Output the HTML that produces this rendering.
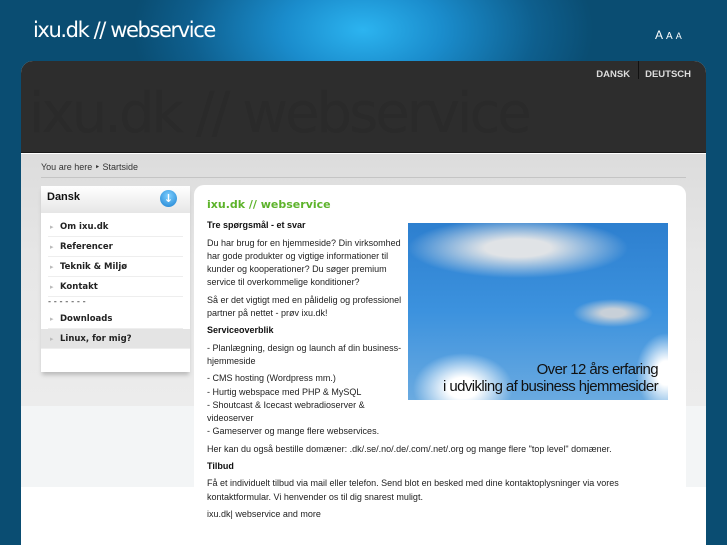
<!DOCTYPE html>
<html><head><meta charset="utf-8"><style>
*{margin:0;padding:0;box-sizing:border-box}
body{width:727px;height:545px;overflow:hidden;font-family:"Liberation Sans",sans-serif;position:relative;
background:radial-gradient(ellipse 230px 130px at 363px 30px,#2cb4f0 0%,#1a8ccc 35%,#0e5f8e 75%,#0a4d72 100%) #0a4d72;}
.logo{position:absolute;left:33px;top:18px;color:#fff;font-size:21px;letter-spacing:-1.4px;font-family:"DejaVu Sans","Liberation Sans",sans-serif;font-weight:normal}
.aaa{position:absolute;left:655px;top:28px;color:#fff;font-size:11px}
.aaa span{margin-right:3px}
.wrap{position:absolute;left:21px;top:61px;width:685px;height:484px;background:#fff;border-radius:12px 12px 0 0;overflow:hidden}
.dark{height:92px;background:#2d2d2d;position:relative;border-bottom:1px solid #1a1a1a}
.nav{position:absolute;right:9px;top:8px;color:#ddd;font-size:9.5px;font-weight:bold}
.nav span{padding:0 6px}
.nav .sep{border-left:1px solid #111;display:inline-block;height:20px;vertical-align:middle;margin-top:-10px;margin-left:2px}
.ghost{position:absolute;left:8px;top:20px;font-size:56px;color:#2a2a2a;letter-spacing:-3px;font-family:"DejaVu Sans",sans-serif}
.gray{position:absolute;top:93px;left:0;width:685px;height:252px;background:linear-gradient(#dcdcdc,#e6e6e6 40%,#ececec)}
.gray2{position:absolute;top:345px;left:0;width:685px;height:81px;background:#f3f5f6}
.bc{position:absolute;left:20px;top:101px;font-size:9px;color:#333}
.bcl{position:absolute;left:20px;top:116px;width:645px;border-top:1px solid #c4c4c4}
.side{position:absolute;left:20px;top:125px;width:149px;height:186px;background:#fff;box-shadow:0 4px 4px -1px #bbb}
.sh{height:27px;background:linear-gradient(#fff,#e6e6e6);font-weight:bold;font-size:11px;padding:5px 0 0 6px;color:#111}
.ico{position:absolute;right:13px;top:4px;width:17px;height:17px;border-radius:50%;background:radial-gradient(circle at 50% 35%,#7fd0ff,#1a7fd0);color:#fff;font-size:11px;text-align:center;line-height:17px;font-family:"DejaVu Sans",sans-serif}
.side ul{list-style:none;padding:4px 7px 0 7px}
.side li{font-weight:bold;color:#222;height:20px;line-height:20px;border-bottom:1px solid #eee;padding-left:12px;position:relative;font-family:"DejaVu Sans",sans-serif;font-size:8.5px}
.side li:before{content:"\25B8";position:absolute;left:2px;color:#bbb;font-size:7px}
.side li.d{border:none;padding:0;height:12px;line-height:10px;font-weight:normal}
.side li.d:before{content:""}
.side li.hl{background:#e4e4e4;margin:0 -7px;padding-left:19px}
.side li.hl:before{left:9px}
.main{position:absolute;left:173px;top:124px;width:492px;height:330px;background:#fff;border-radius:10px 10px 0 0;padding:13px 13px;font-size:9px;color:#222;line-height:13.3px}
h1{color:#5db32b;font-weight:bold;margin-bottom:8px;font-family:"DejaVu Sans",sans-serif;font-size:11px}
.main p{margin-bottom:4px}
.main b{color:#111}
.img{float:right;width:260px;height:177px;margin:4px 5px 4px 6px;position:relative;overflow:hidden;
background:radial-gradient(ellipse 110px 30px at 110px 25px,#e0e3e6 30%,rgba(220,225,230,0) 100%),radial-gradient(ellipse 40px 14px at 205px 90px,#c8d0d8 30%,rgba(200,210,220,0)),radial-gradient(ellipse 50px 35px at 55px 165px,#fff 30%,rgba(255,255,255,0)),radial-gradient(ellipse 30px 40px at 258px 150px,#fff 30%,rgba(255,255,255,0)),linear-gradient(#2d7fcf,#3c92de 50%,#6aaae0)}
.img div{position:absolute;right:10px;bottom:5px;text-align:right;font-size:15px;line-height:17px;color:#111;letter-spacing:-0.6px}
</style></head><body>
<div class="logo">ixu.dk // webservice</div>
<div class="aaa"><span style="font-size:12px">A</span><span style="font-size:10px">A</span><span style="font-size:9px">A</span></div>
<div class="wrap">
<div class="dark"><div class="ghost">ixu.dk // webservice</div>
<div class="nav"><span>DANSK</span><i class="sep"></i><span>DEUTSCH</span></div></div>
<div class="gray"></div><div class="gray2"></div>
<div class="bc">You are here ‣ Startside</div>
<div class="bcl"></div>
<div class="side"><div class="sh">Dansk<div class="ico">↓</div></div>
<ul><li>Om ixu.dk</li><li>Referencer</li><li>Teknik &amp; Miljø</li><li>Kontakt</li><li class="d">- - - - - - -</li><li>Downloads</li><li class="hl">Linux, for mig?</li></ul></div>
<div class="main">
<h1>ixu.dk // webservice</h1>
<div class="img"><div>Over 12 års erfaring<br>i udvikling af business hjemmesider</div></div>
<p><b>Tre spørgsmål - et svar</b></p>
<p>Du har brug for en hjemmeside? Din virksomhed har gode produkter og vigtige informationer til kunder og kooperationer? Du søger premium service til overkommelige konditioner?</p>
<p>Så er det vigtigt med en pålidelig og professionel partner på nettet - prøv ixu.dk!</p>
<p><b>Serviceoverblik</b></p>
<p>- Planlægning, design og launch af din business-hjemmeside</p>
<p>- CMS hosting (Wordpress mm.)<br>- Hurtig webspace med PHP &amp; MySQL<br>- Shoutcast &amp; Icecast webradioserver &amp; videoserver<br>- Gameserver og mange flere webservices.</p>
<p>Her kan du også bestille domæner: .dk/.se/.no/.de/.com/.net/.org og mange flere "top level" domæner.</p>
<p><b>Tilbud</b></p>
<p>Få et individuelt tilbud via mail eller telefon. Send blot en besked med dine kontaktoplysninger via vores kontaktformular. Vi henvender os til dig snarest muligt.</p>
<p>ixu.dk| webservice and more</p>
</div>
</div>
</body></html>
